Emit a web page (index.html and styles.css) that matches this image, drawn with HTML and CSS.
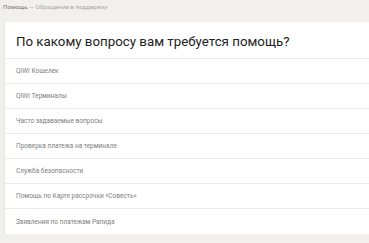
FILE: index.html
```html
<!DOCTYPE html>
<html lang="ru">
<head>
<meta charset="utf-8">
<link rel="stylesheet" href="styles.css">
</head>
<body>
<div class="crumbs"><span class="crumb-main">Помощь</span> — Обращение в поддержку</div>
<div class="card">
  <h1 class="title">По какому вопросу вам требуется помощь?</h1>
  <ul class="list">
    <li class="item">QIWI Кошелек</li>
    <li class="item">QIWI Терминалы</li>
    <li class="item">Часто задаваемые вопросы</li>
    <li class="item">Проверка платежа на терминале</li>
    <li class="item">Служба безопасности</li>
    <li class="item">Помощь по Карте рассрочки «Совесть»</li>
    <li class="item">Заявления по платежам Рапида</li>
  </ul>
</div>
</body>
</html>
```

FILE: styles.css
```css
html, body {
  margin: 0;
  padding: 0;
  background: #f1f0ee;
  font-family: "Roboto", "Liberation Sans", sans-serif;
  overflow: hidden;
}
.crumbs {
  height: 22px;
  padding: 3px 0 0 3px;
  box-sizing: border-box;
  font-size: 6.2px;
  line-height: 9px;
  color: #a9a9a9;
  white-space: nowrap;
}
.crumb-main {
  color: #777;
}
.card {
  margin-left: 5px;
  width: 380px;
  background: #fff;
  box-shadow: 0 1px 2px rgba(0,0,0,0.12);
}
.title {
  margin: 0;
  height: 37px;
  box-sizing: border-box;
  padding: 11px 0 0 11px;
  font-size: 13.3px;
  line-height: 17px;
  font-weight: 400;
  color: #222;
  border-bottom: 1px solid #ebebeb;
  white-space: nowrap;
}
.list {
  list-style: none;
  margin: 0;
  padding: 0;
}
.item {
  height: 25px;
  box-sizing: border-box;
  padding-left: 11px;
  display: flex;
  align-items: center;
  font-size: 6.5px;
  color: #808080;
  border-bottom: 1px solid #ebebeb;
}
.item:last-child {
  border-bottom: none;
}
```
